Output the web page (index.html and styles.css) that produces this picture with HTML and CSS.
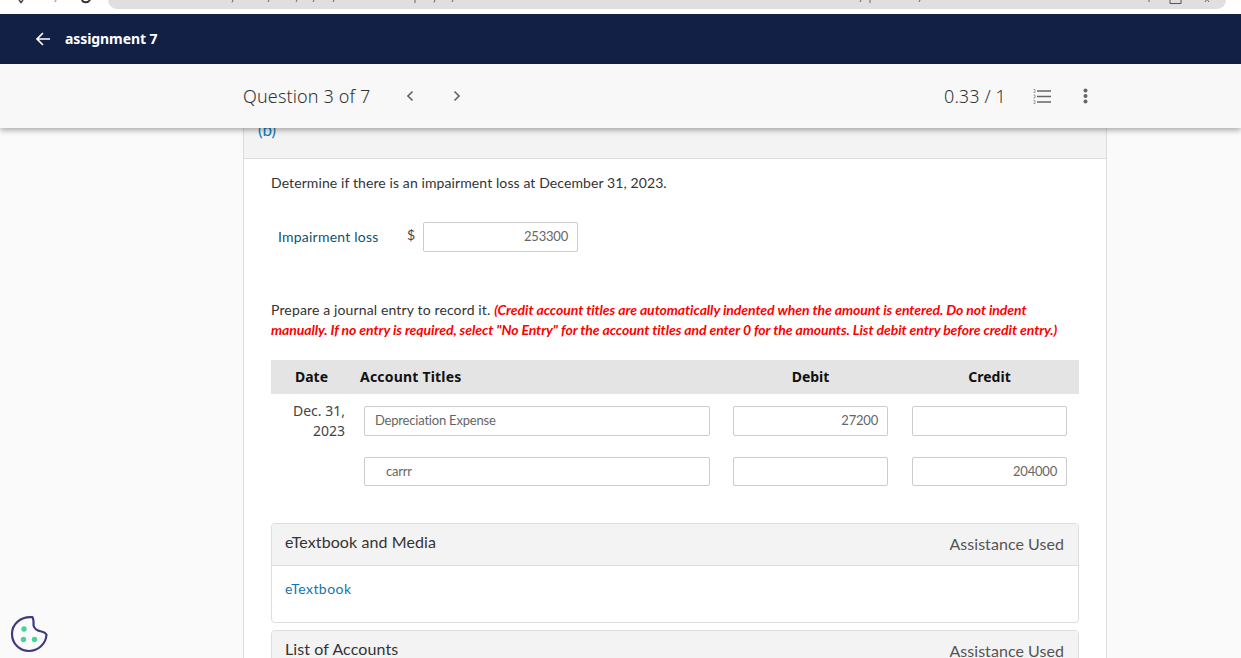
FILE: index.html
```html
<!DOCTYPE html>
<html lang="en">
<head>
<meta charset="utf-8">
<title>assignment 7</title>
<link rel="stylesheet" href="styles.css">
</head>
<body>
<div class="chrome">
  <svg class="chrome-icons" width="1241" height="9" viewBox="0 0 1241 9"><path d="M19 0l2 2.500 2-2.500" fill="none" stroke="#444" stroke-width="1.500"/><path d="M55 2l1-2" fill="none" stroke="#aaa" stroke-width="1.500"/><path d="M82 0c1 3 6 3 8 0" fill="none" stroke="#333" stroke-width="2"/><path d="M232 2.500l1-2.500M268 2l1-2M296 2l1-2M313 2l1-2M333 2l1-2M415 3V0M434 2.500l1-2.500M452 2l1-2M860 2l1-2M870 3V0M919 2l1-2M1149 2V0M1205 2l1.500-2M1209 2l-1.500-2" fill="none" stroke="#666" stroke-width="1"/><path d="M1170 0v3.500h11V0" fill="none" stroke="#555" stroke-width="1"/></svg>
  <div class="urlbar"></div>
</div>
<nav class="topnav">
  <svg class="back" width="16" height="16" viewBox="0 0 16 16"><path d="M15 8H2M8 2L2 8l6 6" fill="none" stroke="#fff" stroke-width="1.700"/></svg>
  <span class="nav-title">assignment 7</span>
</nav>
<header class="qbar">
  <span class="qcount">Question 3 of 7</span>
  <svg class="chev chev-prev" width="8" height="12" viewBox="0 0 8 12"><path d="M6.500 1.500L2 6l4.500 4.500" fill="none" stroke="#666" stroke-width="1.700"/></svg>
  <svg class="chev chev-next" width="8" height="12" viewBox="0 0 8 12"><path d="M1.500 1.500L6 6l-4.500 4.500" fill="none" stroke="#666" stroke-width="1.700"/></svg>
  <span class="score">0.33 / 1</span>
  <svg class="list-ico" width="18" height="15" viewBox="0 0 18 15"><path d="M4 2h14M4 7.500h14M4 13h14" stroke="#666" stroke-width="1.600"/><path d="M.5 .5h1.500v3H.5M.5 6h1.500v3H.5M.5 11.500h1.500v3H.5" fill="none" stroke="#777" stroke-width=".7"/></svg>
  <svg class="more-ico" width="5" height="16" viewBox="0 0 5 16"><circle cx="2.500" cy="2.500" r="2" fill="#666"/><circle cx="2.500" cy="8" r="2" fill="#666"/><circle cx="2.500" cy="13.500" r="2" fill="#666"/></svg>
</header>
<main class="column">
  <div class="part-head"><span class="part-label">(b)</span></div>
  <div class="part-body">
    <p class="prompt">Determine if there is an impairment loss at December 31, 2023.</p>
    <div class="loss-row">
      <span class="loss-label">Impairment loss</span>
      <span class="dollar">$</span>
      <div class="field num loss-field">253300</div>
    </div>
    <p class="instr">Prepare a journal entry to record it. <em>(Credit account titles are automatically indented when the amount is entered. Do not indent manually. If no entry is required, select "No Entry" for the account titles and enter 0 for the amounts. List debit entry before credit entry.)</em></p>
    <div class="journal">
      <div class="jhead jdate">Date</div>
      <div class="jhead jtitle">Account Titles</div>
      <div class="jhead jcenter">Debit</div>
      <div class="jhead jcenter">Credit</div>

      <div class="jcell datecell">Dec. 31, 2023</div>
      <div class="jcell titlecell"><div class="field">Depreciation Expense</div></div>
      <div class="jcell"><div class="field num">27200</div></div>
      <div class="jcell"><div class="field num"></div></div>

      <div class="jcell low"></div>
      <div class="jcell low titlecell"><div class="field short indent">carrr</div></div>
      <div class="jcell low"><div class="field short num"></div></div>
      <div class="jcell low"><div class="field short num">204000</div></div>
    </div>
    <section class="panel">
      <div class="panel-head"><span class="panel-title">eTextbook and Media</span><span class="assist">Assistance Used</span></div>
      <div class="panel-body"><a class="link">eTextbook</a></div>
    </section>
    <section class="panel panel-second">
      <div class="panel-head"><span class="panel-title">List of Accounts</span><span class="assist">Assistance Used</span></div>
    </section>
  </div>
</main>
<svg class="cookie" width="38" height="38" viewBox="0 0 38 38"><path d="M22.500 2.200C11 1 2 9 2 19c0 9.500 7.500 17 17 17 9 0 17-7 17.500-16.500-1-1.500-3-2.500-5-3-3-.500-7-2.500-8-6 .2-3 .2-6-1-8.300z" fill="none" stroke="#3f3a80" stroke-width="2.200" stroke-linejoin="round"/><circle cx="14" cy="14" r="2.700" fill="#42d69b"/><circle cx="13.500" cy="24.500" r="2.700" fill="#42d69b"/><circle cx="24.500" cy="24.500" r="2.700" fill="#42d69b"/></svg>
</body>
</html>
```
FILE: styles.css
```css
* { box-sizing: border-box; }
html, body { margin: 0; height: 658px; overflow: hidden; }
body { background: #fafafa; font-family: "Lato", sans-serif; color: #333; position: relative; }

.chrome { height: 14px; background: #fff; padding-left: 108px; padding-right: 15px; position: relative; }
.chrome-icons { position: absolute; left: 0; top: 0; z-index: 1; }
.urlbar { height: 9px; background: #dfdfdf; border-radius: 0 0 14px 14px; }

.topnav { height: 50px; background: #132046; display: flex; align-items: center; padding-left: 35px; gap: 14px; }
.nav-title { font-family: "Noto Sans", sans-serif; font-weight: 700; font-size: 14px; letter-spacing: -.08px; color: #fff; margin-top: -2px; }

.qbar { height: 64px; background: #f8f8f8; box-shadow: 0 2px 6px rgba(0,0,0,.35); display: flex; align-items: center; padding-left: 243px; position: relative; z-index: 2; }
.qcount { font-family: "Noto Sans", sans-serif; font-weight: 300; font-size: 18px; letter-spacing: .14px; color: #333; width: 163px; }
.chev-next { margin-left: 39px; }
.score { font-family: "Noto Sans", sans-serif; font-weight: 300; font-size: 18px; letter-spacing: .1px; color: #333; margin-left: 483px; }
.list-ico { margin-left: 27px; }
.more-ico { margin-left: 32px; }

.column { width: 864px; margin: -8px 0 0 243px; border: solid #ddd; border-width: 0 1px; background: #fff; }
.part-head { height: 39px; background: #f3f3f3; border-bottom: 1px solid #ddd; padding: 0 0 0 14px; }
.part-label { font-size: 17px; color: #0f7ab5; line-height: 19px; display: block; }
.part-body { padding: 14px 27px 0; }
.prompt { margin: 0; font-size: 14px; line-height: 20px; letter-spacing: .1px; color: #333; }
.loss-row { display: flex; align-items: center; margin-top: 29px; padding-left: 7px; }
.loss-label { font-size: 14px; letter-spacing: .22px; color: #14516f; width: 129px; margin-top: -1px; }
.dollar { font-size: 14px; color: #444; width: 16px; margin-top: -5px; }
.field { height: 30px; border: 1px solid #ccc; border-radius: 2px; background: #fff; font-size: 13px; letter-spacing: -.2px; color: #666; display: flex; align-items: center; padding: 0 10px 2px; }
.field.num { justify-content: flex-end; padding-right: 9px; }
.field.short { height: 29px; }
.field.indent { padding-left: 21px; }
.loss-field { width: 155px; }
.instr { margin: 48px 0 0; padding-right: 10px; font-size: 14px; line-height: 20px; letter-spacing: .14px; color: #333; }
.instr em { color: #f00; font-weight: 700; letter-spacing: -.07px; }

.journal { display: grid; grid-template-columns: 81px 369px 179px 179px; margin-top: 20px; }
.jhead { background: #e4e4e4; height: 34px; display: flex; align-items: center; font-family: "Noto Sans", sans-serif; font-weight: 700; font-size: 14px; color: #111; padding-bottom: 2px; }
.jdate, .jcenter { justify-content: center; }
.jtitle { padding-left: 8px; letter-spacing: .2px; }
.jcell { padding: 12px 12px 0 12px; }
.jcell.low { padding-top: 16px; }
.titlecell { padding-right: 11px; }
.datecell { padding: 7px 7px 0 0; text-align: right; font-family: "Noto Sans", sans-serif; font-size: 14px; line-height: 20px; color: #444; }

.panel { margin-top: 37px; border: 1px solid #ddd; border-radius: 4px; background: #fff; }
.panel-second { margin-top: 7px; }
.panel-head { height: 42px; background: #f3f3f3; border-bottom: 1px solid #ddd; border-radius: 4px 4px 0 0; display: flex; justify-content: space-between; align-items: center; padding: 0 14px 0 13px; }
.panel-title { font-size: 16px; letter-spacing: .1px; color: #333; margin-top: -7px; }
.assist { font-size: 16px; letter-spacing: .05px; color: #555; margin-top: -3px; }
.panel-body { height: 56px; padding: 14px 13px; font-size: 14px; line-height: 17px; }
.link { color: #0f76ad; letter-spacing: .45px; }

.cookie { position: absolute; left: 10px; top: 615px; }
```
